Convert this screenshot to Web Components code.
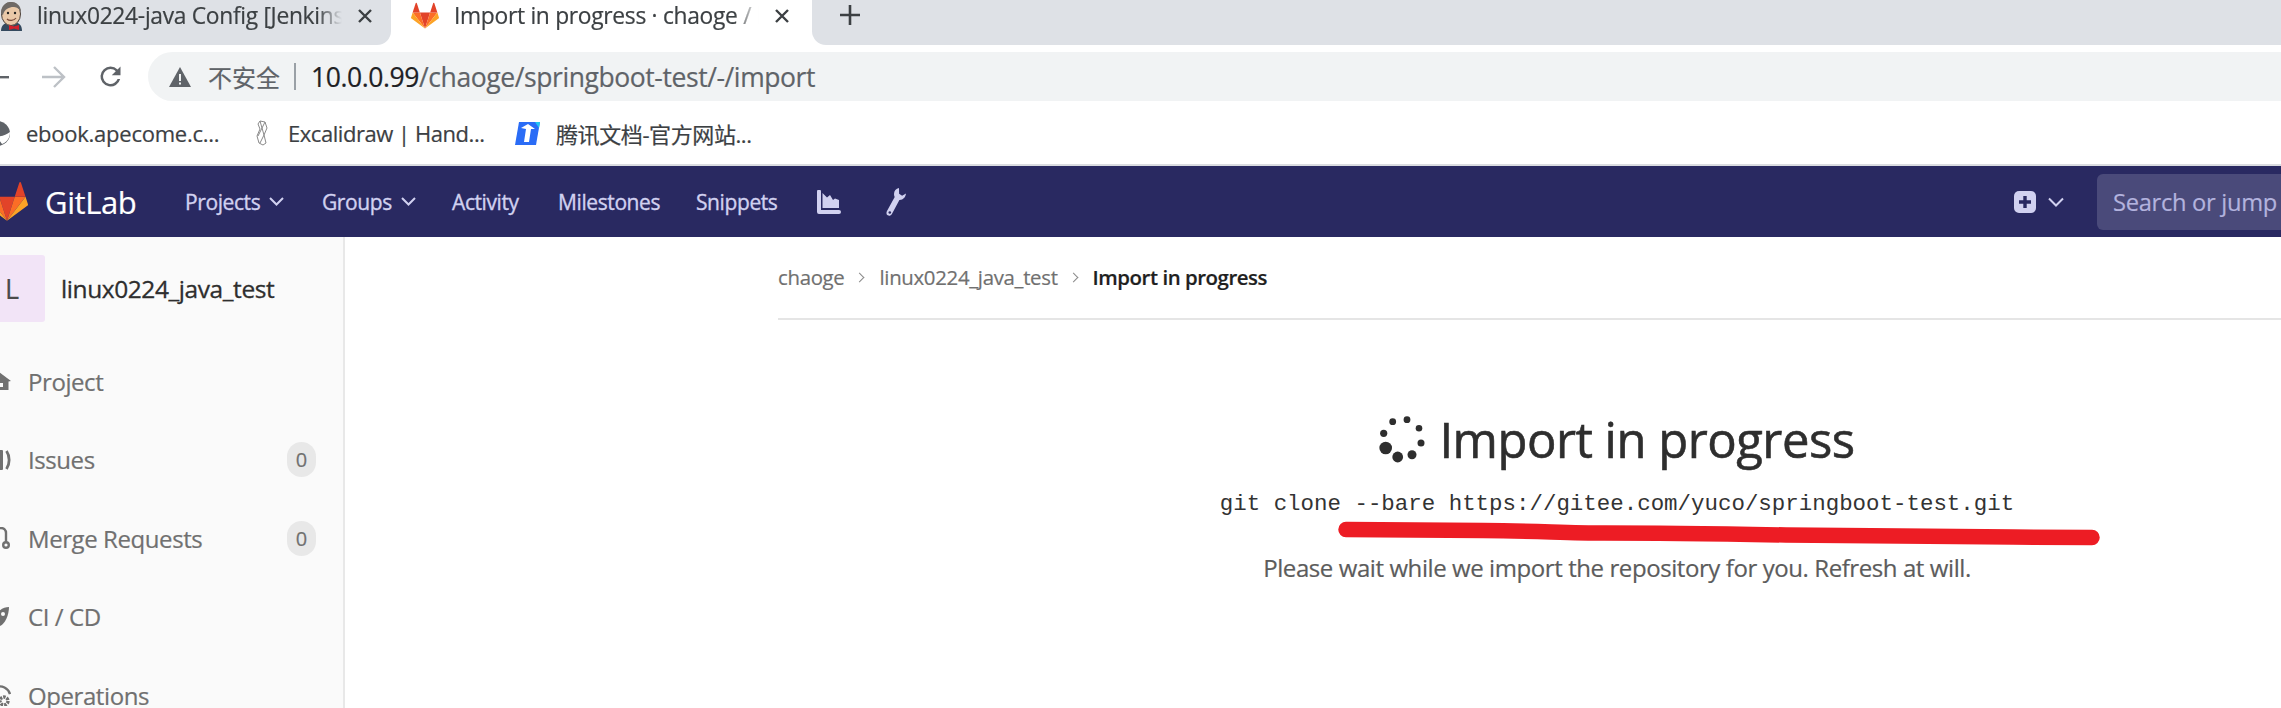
<!DOCTYPE html>
<html>
<head>
<meta charset="utf-8">
<title>Import in progress</title>
<style>
  html, body { margin: 0; height: 708px; overflow: hidden; background: #fff; }
  body { display: flex; flex-direction: column; font-family: "Open Sans", "Noto Sans CJK SC", sans-serif; -webkit-text-stroke: .2px; }
</style>
</head>
<body>
<browser-tabs>
  <browser-tab>
    <svg slot="icon" width="22" height="30" viewBox="-2 0 22 30">
      <path d="M-1 30c0-6 4-9 11-9s10 3 10 9z" fill="#34495e"/>
      <ellipse cx="9" cy="13" rx="9.5" ry="11.5" fill="#eac9a8" stroke="#4b4038"/>
      <path d="M-1 13C-1 4 4 1 9 1s10 3 10 10c-2-4-5-5-8-5S2 8 1 14z" fill="#6f6a66"/>
      <circle cx="6" cy="12" r="1.2" fill="#222"/><circle cx="13" cy="12" r="1.2" fill="#222"/>
      <path d="M5 18c2 2 7 2 9-1" fill="none" stroke="#7a4a3a" stroke-width="1.2"/>
      <path d="M7 24l5 1.5 5-1.5v5l-5-1.5-5 1.5z" fill="#d3212b"/>
    </svg>
    linux0224-java Config [Jenkins]
  </browser-tab>
  <browser-tab active>
    <gl-tanuki slot="icon" size="28"></gl-tanuki>
    Import in progress · chaoge / linux
  </browser-tab>
</browser-tabs>
<browser-toolbar>
  <span slot="flag">不安全</span>
  <span slot="host">10.0.0.99</span><span slot="path">/chaoge/springboot-test/-/import</span>
</browser-toolbar>
<bookmark-bar>
  <bookmark-item style="margin-left:-8px;width:264px">
    <svg slot="icon" width="18" height="25" viewBox="0 0 18 25"><circle cx="5.5" cy="12.5" r="12.5" fill="#5f6368"/><path d="M4 15c5 1 10-1 14-4 0 6-3 10-8 12z" fill="#fff"/></svg>
    ebook.apecome.c...
  </bookmark-item>
  <bookmark-item style="width:259px;gap:20px;letter-spacing:-.45px">
    <svg slot="icon" width="12" height="26" viewBox="0 0 12 26" fill="none" stroke="#8a8a8a"><path d="M4 1l5 1 2 6-3 7 2 8-3 2-4-2-2-7 3-7-2-5zM4 1l4 14-4 8M9 2L2 16"/></svg>
    Excalidraw | Hand...
  </bookmark-item>
  <bookmark-item style="letter-spacing:-.4px">
    <svg slot="icon" width="25" height="24" viewBox="0 0 25 24"><path d="M4 1h21l-4 23H0z" fill="#2a6cf6"/><path d="M6 7l7-4 7 5h-4l-2 13H9l2-13z" fill="#fff"/><path d="M20 1h5l-1 6z" fill="#22c6f2"/></svg>
    腾讯文档-官方网站...
  </bookmark-item>
</bookmark-bar>
<gl-navbar>
  <nav-link caret style="width:137px">Projects</nav-link>
  <nav-link caret style="width:130px">Groups</nav-link>
  <nav-link style="width:106px">Activity</nav-link>
  <nav-link style="width:138px">Milestones</nav-link>
  <nav-link style="width:121px">Snippets</nav-link>
</gl-navbar>
<page-body>
  <gl-sidebar slot="side" project="linux0224_java_test" letter="L">
    <side-item label="Project">
      <svg width="18" height="22" viewBox="-7 0 18 22" fill="#707070"><path d="M-1 2L11 11 8.5 11.5V20H-7V2z"/><path d="M-3 13h6v4h-6z" fill="#fafafa"/></svg>
    </side-item>
    <side-item label="Issues" count="0">
      <svg width="18" height="22" viewBox="-7 0 18 22" fill="#707070"><rect x="-7" y="1" width="10" height="20" rx="1"/><path d="M6.5 2c3.5 5 3.5 13 0 18" fill="none" stroke="#707070" stroke-width="2.8"/></svg>
    </side-item>
    <side-item label="Merge Requests" count="0">
      <svg width="18" height="22" viewBox="-7 0 18 22" fill="none" stroke="#707070" stroke-width="2.4"><path d="M-3 1h4a5 5 0 0 1 5 5v9"/><circle cx="6" cy="18" r="2.8"/></svg>
    </side-item>
    <side-item label="CI / CD">
      <svg width="18" height="22" viewBox="-7 0 18 22" fill="#707070"><path d="M9 1C3 1-3 5-6 13l6 7C5 18 9 9 9 1z"/><circle cx="3" cy="8" r="2" fill="#fafafa"/></svg>
    </side-item>
    <side-item label="Operations">
      <svg width="18" height="22" viewBox="-7 0 18 22" fill="none" stroke="#707070" stroke-width="2.4"><path d="M-4 3c6-2 12 1 14 7"/><circle cx="4" cy="17" r="4" stroke-width="3.4" stroke-dasharray="2.5 1"/></svg>
    </side-item>
  </gl-sidebar>
  <gl-breadcrumbs slot="crumbs">
    <span>chaoge</span><span>linux0224_java_test</span><span>Import in progress</span>
  </gl-breadcrumbs>
  <import-status slot="status" command="git clone --bare https://gitee.com/yuco/springboot-test.git">Please wait while we import the repository for you. Refresh at will.</import-status>
</page-body>

<script>
// gitlab fox, used in the tab and in the navbar
class GlTanuki extends HTMLElement {
  constructor() {
    super();
    this.attachShadow({ mode: 'open' });
  }
  connectedCallback() {
    const size = this.getAttribute('size') || 36;
    this.shadowRoot.innerHTML = `
      <style>:host { display: block; line-height: 0; }</style>
      <svg width="${size}" height="${size}" viewBox="0 0 36 36">
        <path d="M18 34L24.6 13.6H11.4z" fill="#e24329"/>
        <path d="M18 34L11.4 13.6H2.1z" fill="#fc6d26"/>
        <path d="M2.1 13.6L.1 19.8a1.3 1.3 0 0 0 .5 1.5L18 34z" fill="#fca326"/>
        <path d="M2.1 13.6h9.3L7.4 1.3a.7.7 0 0 0-1.3 0z" fill="#e24329"/>
        <path d="M18 34l6.6-20.4h9.3z" fill="#fc6d26"/>
        <path d="M33.9 13.6l2 6.2a1.3 1.3 0 0 1-.5 1.5L18 34z" fill="#fca326"/>
        <path d="M33.9 13.6h-9.3l4-12.3a.7.7 0 0 1 1.3 0z" fill="#e24329"/>
      </svg>`;
  }
}
customElements.define('gl-tanuki', GlTanuki);

class BrowserTabs extends HTMLElement {
  constructor() {
    super();
    this.attachShadow({ mode: 'open' }).innerHTML = `
      <style>
        :host { display: flex; height: 45px; flex: none; background: #fff; overflow: hidden; }
        .rest { flex: 1; background: #dee1e6; border-bottom-left-radius: 14px; padding: 5px 0 0 28px; }
      </style>
      <slot></slot>
      <div class="rest">
        <svg width="20" height="20" viewBox="0 0 20 20" stroke="#3c4043" stroke-width="2.6"><path d="M10 0v20M0 10h20"/></svg>
      </div>`;
  }
}
customElements.define('browser-tabs', BrowserTabs);

class BrowserTab extends HTMLElement {
  constructor() {
    super();
    this.attachShadow({ mode: 'open' }).innerHTML = `
      <style>
        :host { display: block; flex: none; width: 391px; box-sizing: border-box; background: #dee1e6; border-bottom-right-radius: 14px; }
        :host([active]) { width: 421px; background: #fff; border-radius: 0; }
        .in { display: flex; align-items: center; height: 32px; }
        :host([active]) .in { padding-left: 20px; }
        ::slotted([slot=icon]) { flex: none; }
        .title { flex: none; width: 305px; margin-left: 15px; overflow: hidden; white-space: nowrap;
          font-size: 22.8px; letter-spacing: -.3px; color: #3c4043; padding-bottom: 1px;
          mask-image: linear-gradient(90deg, #000 92%, transparent); }
        svg { flex: none; margin-left: 16px; }
      </style>
      <div class="in">
        <slot name="icon"></slot>
        <div class="title"><slot></slot></div>
        <svg width="14" height="14" viewBox="0 0 14 14" stroke="#3c4043" stroke-width="2.4"><path d="M1 1l12 12M13 1L1 13"/></svg>
      </div>`;
  }
}
customElements.define('browser-tab', BrowserTab);

class BrowserToolbar extends HTMLElement {
  constructor() {
    super();
    this.attachShadow({ mode: 'open' }).innerHTML = `
      <style>
        :host { display: flex; flex: none; height: 56px; padding-top: 7px; background: #fff; }
        .nav { display: flex; align-items: center; width: 148px; height: 49px; flex: none; }
        .nav svg { flex: none; }
        .omni { flex: 1; height: 49px; display: flex; align-items: center; background: #f1f3f4;
          border-radius: 25px 0 0 25px; padding-left: 21px; font-size: 26.5px; letter-spacing: -.42px; white-space: nowrap; }
        .warn { margin-right: 17px; flex: none; }
        .flag { font-size: 24px; letter-spacing: 0; color: #5f6368; }
        .sep { width: 2px; height: 27px; background: #9aa0a6; margin: 0 15px 0 14px; }
        .host { color: #202124; }
        .path { color: #5f6368; }
      </style>
      <div class="nav">
        <svg width="9" height="4" viewBox="0 0 9 4" style="margin-right:33px"><rect width="9" height="2.4" y="1" fill="#5f6368"/></svg>
        <svg width="24" height="22" viewBox="0 0 24 22" fill="none" stroke="#bdc1c6" stroke-width="2.4" style="margin-right:32px"><path d="M0 11h22M12 1l10 10-10 10"/></svg>
        <svg width="25" height="25" viewBox="0 0 24 24"><path d="M17.65 6.35A7.96 7.96 0 0 0 12 4a8 8 0 1 0 7.73 10h-2.08A6 6 0 1 1 12 6c1.66 0 3.14.69 4.22 1.78L13 11h7V4z" fill="#5f6368" transform="translate(-2.4 -2.4) scale(1.2)"/></svg>
      </div>
      <div class="omni">
        <svg class="warn" width="22" height="20" viewBox="0 0 22 20"><path d="M11 0l11 20H0z" fill="#5f6368"/><path d="M10 7h2v7h-2zM10 15.5h2v2h-2z" fill="#f1f3f4"/></svg>
        <span class="flag"><slot name="flag"></slot></span>
        <span class="sep"></span>
        <span class="host"><slot name="host"></slot></span><span class="path"><slot name="path"></slot></span>
      </div>`;
  }
}
customElements.define('browser-toolbar', BrowserToolbar);

class BookmarkBar extends HTMLElement {
  constructor() {
    super();
    this.attachShadow({ mode: 'open' }).innerHTML = `
      <style>
        :host { display: flex; flex: none; align-items: center; height: 58px; box-sizing: border-box; background: #fff; border-bottom: 2px solid #dadce0; padding-bottom: 6px; }
      </style>
      <slot></slot>`;
  }
}
customElements.define('bookmark-bar', BookmarkBar);

class BookmarkItem extends HTMLElement {
  constructor() {
    super();
    this.attachShadow({ mode: 'open' }).innerHTML = `
      <style>
        :host { display: flex; flex: none; align-items: center; gap: 16px; font-size: 22px; letter-spacing: -.25px; color: #3c4043; white-space: nowrap; }
        ::slotted(svg) { flex: none; }
      </style>
      <slot name="icon"></slot><slot></slot>`;
  }
}
customElements.define('bookmark-item', BookmarkItem);

class GlNavbar extends HTMLElement {
  constructor() {
    super();
    this.attachShadow({ mode: 'open' }).innerHTML = `
      <style>
        :host { display: flex; flex: none; align-items: center; height: 71px; background: #292961; color: #d1d1f0; }
        gl-tanuki { margin-left: -14px; flex: none; }
        .brand { color: #fff; font-size: 31px; letter-spacing: -.4px; margin: 0 50px 0 17px; width: 90px; flex: none; }
        .links { display: flex; align-items: center; flex: none; }
        .tools { display: flex; align-items: center; gap: 45px; }
        .right { margin-left: auto; display: flex; align-items: center; flex: none; }
        .search { width: 184px; height: 56px; box-sizing: border-box; padding-left: 16px; display: flex; align-items: center;
          background: #4a4a7a; border-radius: 6px 0 0 6px; color: #b3b3de; font-size: 23.7px; letter-spacing: -.3px; white-space: nowrap; }
      </style>
      <gl-tanuki size="42"></gl-tanuki>
      <div class="brand">GitLab</div>
      <div class="links"><slot></slot></div>
      <div class="tools">
        <svg width="24" height="24" viewBox="0 0 24 24" fill="#d1d1f0"><path d="M0 1.5A1.5 1.5 0 0 1 4 1.5V20h18a2 2 0 0 1 0 4H2a2 2 0 0 1-2-2z"/><path d="M5.5 18V3l4.5 4.5L13 5l3 5 2-1.5L22 10v8z"/></svg>
        <svg width="20" height="28" viewBox="0 0 20 28" fill="#d1d1f0"><path d="M13 0c-3 .5-5 3-5 6 0 1.2.3 2.2.7 3L1 23c-1 1.8-.5 3.6.8 4.3 1.4.8 3.2.2 4.1-1.4L13.4 12c3.6.2 6.2-2.6 6.6-6.4l-3.9 2.2-3-2z"/><circle cx="3.8" cy="24.5" r="1.3" fill="#292961"/></svg>
      </div>
      <div class="right">
        <svg width="22" height="22" viewBox="0 0 22 22"><rect width="22" height="22" rx="5" fill="#d1d1f0"/><path d="M11 5v12M5 11h12" stroke="#292961" stroke-width="3.4"/></svg>
        <svg width="16" height="10" viewBox="0 0 16 10" fill="none" stroke="#d1d1f0" stroke-width="2" style="margin:0 33px 0 12px"><path d="M1 1.5l7 7 7-7"/></svg>
        <div class="search">Search or jump</div>
      </div>`;
  }
}
customElements.define('gl-navbar', GlNavbar);

class NavLink extends HTMLElement {
  constructor() {
    super();
    this.attachShadow({ mode: 'open' }).innerHTML = `
      <style>
        :host { display: flex; flex: none; align-items: center; gap: 9px; font-size: 21px; letter-spacing: -.4px; -webkit-text-stroke: .35px; white-space: nowrap; }
        svg { display: none; flex: none; }
        :host([caret]) svg { display: block; }
      </style>
      <slot></slot>
      <svg width="15" height="9" viewBox="0 0 15 9" fill="none" stroke="#d1d1f0" stroke-width="2"><path d="M1 1l6.5 6.5L14 1"/></svg>`;
  }
}
customElements.define('nav-link', NavLink);

class PageBody extends HTMLElement {
  constructor() {
    super();
    this.attachShadow({ mode: 'open' }).innerHTML = `
      <style>
        :host { display: flex; flex: 1; min-height: 0; overflow: hidden; }
        .main { flex: none; width: 1680px; margin-left: 433px; display: flex; flex-direction: column; }
      </style>
      <slot name="side"></slot>
      <div class="main">
        <slot name="crumbs"></slot>
        <slot name="status"></slot>
      </div>`;
  }
}
customElements.define('page-body', PageBody);

class GlSidebar extends HTMLElement {
  constructor() {
    super();
    this.attachShadow({ mode: 'open' }).innerHTML = `
      <style>
        :host { display: block; flex: none; width: 345px; box-sizing: border-box; background: #fafafa; border-right: 2px solid #e8e8e8; overflow: hidden; }
        .head { display: flex; align-items: center; height: 67px; margin: 18px 0 20px; }
        .avatar { width: 67px; height: 67px; margin-left: -22px; flex: none; box-sizing: border-box; padding-left: 27px; display: flex; align-items: center;
          background: #f2e4f7; border-radius: 3px; color: #4a4a4a; font-size: 27px; }
        .name { margin-left: 16px; font-size: 24.5px; letter-spacing: -.42px; color: #2e2e2e; -webkit-text-stroke: .3px; white-space: nowrap; }
      </style>
      <div class="head"><div class="avatar"></div><div class="name"></div></div>
      <slot></slot>`;
  }
  connectedCallback() {
    this.shadowRoot.querySelector('.avatar').textContent = this.getAttribute('letter');
    this.shadowRoot.querySelector('.name').textContent = this.getAttribute('project');
  }
}
customElements.define('gl-sidebar', GlSidebar);

class SideItem extends HTMLElement {
  constructor() {
    super();
    this.attachShadow({ mode: 'open' }).innerHTML = `
      <style>
        :host { display: flex; align-items: center; height: 78.5px; color: #707070; font-size: 24px; letter-spacing: -.42px; white-space: nowrap; }
        .ic { width: 18px; margin-left: -7px; margin-right: 17px; flex: none; display: flex; }
        .label { flex: 1; }
        .count { width: 29px; height: 35px; margin-right: 27px; border-radius: 17px; background: #e8e8e8; font-size: 20px; letter-spacing: 0;
          display: flex; align-items: center; justify-content: center; }
        .count:empty { display: none; }
      </style>
      <div class="ic"><slot></slot></div>
      <div class="label"></div>
      <div class="count"></div>`;
  }
  connectedCallback() {
    this.shadowRoot.querySelector('.label').textContent = this.getAttribute('label');
    this.shadowRoot.querySelector('.count').textContent = this.getAttribute('count') || '';
  }
}
customElements.define('side-item', SideItem);

class GlBreadcrumbs extends HTMLElement {
  constructor() {
    super();
    this.attachShadow({ mode: 'open' }).innerHTML = `
      <style>
        :host { display: flex; flex: none; align-items: center; height: 83px; box-sizing: border-box; border-bottom: 2px solid #e5e5e5; font-size: 20.4px; letter-spacing: -.32px; color: #707070; white-space: nowrap; padding-bottom: 1px; }
        ::slotted(span) { display: flex; align-items: center; }
        ::slotted(span:last-child) { color: #1f1f1f; font-weight: 600; letter-spacing: -.45px; }
        ::slotted(span:not(:last-child))::after {
          content: ""; width: 6px; height: 6px; margin: 0 16px 0 12px; border: solid #8a8a8a; border-width: 1.5px 1.5px 0 0; transform: rotate(45deg);
        }
      </style>
      <slot></slot>`;
  }
}
customElements.define('gl-breadcrumbs', GlBreadcrumbs);

class ImportStatus extends HTMLElement {
  constructor() {
    super();
    this.attachShadow({ mode: 'open' }).innerHTML = `
      <style>
        :host { display: block; position: relative; text-align: center; color: #5c5c5c; }
        h1 { margin: 0; padding: 84px 3px 0 0; height: 70px; display: flex; justify-content: center; align-items: center; gap: 13px; font-size: 49px; line-height: 70px;
          font-weight: 400; -webkit-text-stroke: .6px; letter-spacing: -.5px; color: #2e2e2e; }
        h1 svg { flex: none; }
        pre { margin: 14px 0 0; padding-right: 2px; font-family: "Liberation Mono", monospace; -webkit-text-stroke: 0; font-size: 22.45px; line-height: 32px; color: #333; }
        p { margin: 31px 0 0; padding-right: 2px; font-size: 24px; line-height: 34px; letter-spacing: -.42px; }
        .scribble { position: absolute; left: 560px; top: 195px; }
      </style>
      <h1>
        <svg width="48" height="49" viewBox="0 0 48 49" fill="#2e2e2e">
          <circle cx="14.7" cy="6.7" r="3.4"/><circle cx="29" cy="4.7" r="3.4"/><circle cx="41" cy="13.3" r="3.3"/><circle cx="43" cy="28" r="3.5"/>
          <circle cx="34" cy="39.7" r="4.5"/><circle cx="19.7" cy="42" r="5.4"/><circle cx="7.7" cy="33" r="6.3"/><circle cx="5.7" cy="18.3" r="3.6"/>
        </svg>
        <span>Import in progress</span>
      </h1>
      <pre></pre>
      <p><slot></slot></p>
      <svg class="scribble" width="770" height="40" viewBox="0 0 770 40">
        <path d="M8 14.5C60 14.5 110 15 145 15.5C200 16 230 18 266 18C330 18 390 19 448 20C540 21 650 22 754 22.5" fill="none" stroke="#ed1c24" stroke-width="15.5" stroke-linecap="round"/>
      </svg>`;
  }
  connectedCallback() {
    this.shadowRoot.querySelector('pre').textContent = this.getAttribute('command');
  }
}
customElements.define('import-status', ImportStatus);
</script>
</body>
</html>
